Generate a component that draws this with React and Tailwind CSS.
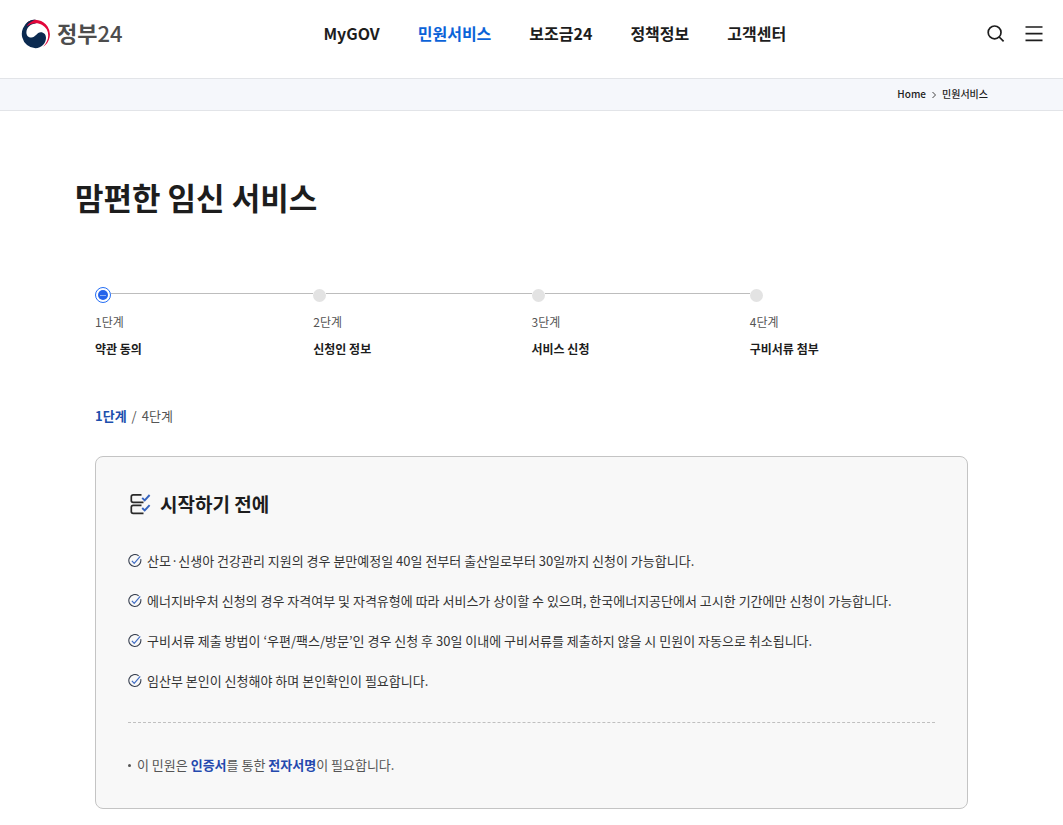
import React from "react";

const menu = ["MyGOV", "민원서비스", "보조금24", "정책정보", "고객센터"];

const steps = ["약관 동의", "신청인 정보", "서비스 신청", "구비서류 첨부"];

const notices = [
  "산모·신생아 건강관리 지원의 경우 분만예정일 40일 전부터 출산일로부터 30일까지 신청이 가능합니다.",
  "에너지바우처 신청의 경우 자격여부 및 자격유형에 따라 서비스가 상이할 수 있으며, 한국에너지공단에서 고시한 기간에만 신청이 가능합니다.",
  "구비서류 제출 방법이 ‘우편/팩스/방문’인 경우 신청 후 30일 이내에 구비서류를 제출하지 않을 시 민원이 자동으로 취소됩니다.",
  "임산부 본인이 신청해야 하며 본인확인이 필요합니다.",
];

function Emblem() {
  return (
    <svg width="31" height="30" viewBox="-1 0 31 30" aria-hidden="true">
      <path
        d="M8 2.3A14.5 14.5 0 0 0 14.5 29.3C20.5 29 25 24.6 25 18.8C25 15.4 22.8 13.2 19.8 13.2C15.8 13.2 14.4 18.5 10.4 18.5C7.4 18.5 5.4 16.4 5.4 13.4C5.4 8.4 9.8 4.6 15 4.4C12.8 3 10.4 2.2 8 2.3Z"
        fill="#0b2a50"
      />
      <path
        d="M6.4 3.2A14.5 14.5 0 0 1 22.2 27.7C27.2 22.6 28.6 16 25.8 10.6C22.2 4.2 13.6 1.8 5.8 7.2Z"
        fill="#e2063a"
      />
      <path d="M5.6 3.9A14.5 14.5 0 0 1 15 .5C11.4 1.6 8.2 3.6 5.4 7.4Z" fill="#0b2a50" />
    </svg>
  );
}

function SearchIcon() {
  return (
    <svg width="18" height="18" viewBox="0 0 18 18" fill="none" stroke="#1d1d1d" strokeWidth="1.7" aria-hidden="true">
      <circle cx="7.6" cy="7.4" r="6.4" />
      <path d="M12.2 12L16.6 16.4" />
    </svg>
  );
}

function MenuIcon() {
  return (
    <svg width="18" height="18" viewBox="0 0 18 18" fill="none" stroke="#1d1d1d" strokeWidth="1.7" aria-hidden="true">
      <path d="M.5 2H17.5M.5 8.7H17.5M.5 15.4H17.5" />
    </svg>
  );
}

function ChecklistIcon() {
  return (
    <svg width="24" height="24" viewBox="0 0 24 24" fill="none" strokeWidth="1.7" aria-hidden="true">
      <path
        d="M13.5 2.8H5.2Q3.3 2.8 3.3 4.7V8.4Q3.3 10.3 5.2 10.3H15.5M13.5 13.3H5.2Q3.3 13.3 3.3 15.2V19.4Q3.3 21.3 5.2 21.3H15.5"
        stroke="#2a2a2a"
      />
      <path d="M14.2 5.8L16.7 8.3L21.6 3M14.2 16L16.7 18.5L21.6 13.2" stroke="#3663bd" strokeWidth="1.9" />
    </svg>
  );
}

function CheckIcon() {
  return (
    <svg className="shrink-0" width="14" height="14" viewBox="0 0 14 14" fill="none" aria-hidden="true">
      <path d="M10.7 1.9A6 6 0 1 0 12.7 5.2" stroke="#3a4252" strokeWidth="1.1" />
      <path d="M3.9 6.9L6.2 9.3L12.2 2.4" stroke="#3f6cc4" strokeWidth="1.2" />
    </svg>
  );
}

export default function App() {
  return (
    <div className="min-h-screen bg-white pb-4 font-['Noto_Sans_CJK_KR',sans-serif] text-[#1d1d1d]">
      <header className="flex h-[78px] items-start justify-between px-5">
        <a href="#" className="flex h-[67px] items-center gap-1.5" aria-label="정부24">
          <Emblem />
          <span className="pb-1 text-[22px] leading-8 font-medium text-[#4d4d4d]">
            <b className="font-bold">정부</b>24
          </span>
        </a>
        <nav className="flex h-[65px] items-center gap-[38px]">
          {menu.map((item, i) => (
            <a
              key={item}
              href="#"
              className={i === 1 ? "text-base leading-6 font-bold text-[#0b63d8]" : "text-base leading-6 font-bold"}
            >
              {item}
            </a>
          ))}
        </nav>
        <div className="flex h-[67px] items-center gap-5">
          <button type="button" aria-label="검색">
            <SearchIcon />
          </button>
          <button type="button" aria-label="전체메뉴">
            <MenuIcon />
          </button>
        </div>
      </header>

      <div className="border-y border-[#e2e4e8] bg-[#f5f7fb] px-[75px]">
        <nav
          className="flex h-[31px] items-center justify-end gap-1.5 pb-0.5 text-[10px] leading-4 font-medium"
          aria-label="현재 위치"
        >
          <a href="#">Home</a>
          <svg className="mt-0.5" width="4" height="8" viewBox="0 0 4 8" fill="none" stroke="#444" aria-hidden="true">
            <path d="M.5 1L3.5 4L.5 7" />
          </svg>
          <a href="#">민원서비스</a>
        </nav>
      </div>

      <main className="px-[75px] pt-[62px]">
        <h1 className="text-[31px] leading-12 font-bold">맘편한 임신 서비스</h1>

        <div className="px-5 pt-[66px]">
          <ol className="grid grid-cols-4">
            {steps.map((label, i) => (
              <li key={label}>
                <div className="flex h-4 items-center">
                  {i === 0 ? (
                    <span className="flex size-4 items-center justify-center rounded-full border border-[#256ef4] bg-white">
                      <span className="flex size-2.5 items-center justify-center rounded-full bg-[#2563eb]">
                        <span className="h-px w-1.5 bg-[#8fb2f5]" />
                      </span>
                    </span>
                  ) : (
                    <span className="size-[13px] rounded-full bg-[#e3e3e3]" />
                  )}
                  {i < 3 && <span className="mb-[3px] h-px flex-1 bg-[#bdbdbd]" />}
                </div>
                <p className="mt-[9px] text-xs leading-5 text-[#555]">{i + 1}단계</p>
                <p className="mt-[7px] text-xs leading-5 font-bold">{label}</p>
              </li>
            ))}
          </ol>

          <p className="mt-[45px] flex gap-[5px] text-[13px] leading-6 text-[#555]">
            <strong className="font-bold text-[#1d4fad]">1단계</strong>
            <span>/</span>
            <span>4단계</span>
          </p>

          <section className="mt-7 rounded-lg border border-[#c4c4c4] bg-[#f8f8f8] px-8 pt-8 pb-[29px]">
            <h2 className="flex items-center gap-2 text-[19px] leading-[30px] font-bold">
              <ChecklistIcon />
              시작하기 전에
            </h2>
            <ul className="mt-[30px] flex flex-col gap-4">
              {notices.map((text) => (
                <li key={text} className="flex items-center gap-[5px] text-[13px] leading-6 text-[#333]">
                  <CheckIcon />
                  {text}
                </li>
              ))}
            </ul>
            <hr className="mt-[29px] border-0 border-t border-dashed border-[#c0c0c0]" />
            <p className="mt-7 flex items-center gap-1.5 text-[13px] leading-7 text-[#555]">
              <span className="size-[3px] rounded-full bg-[#555]" />
              <span>
                이 민원은 <strong className="font-bold text-[#2449ae]">인증서</strong>를 통한{" "}
                <strong className="font-bold text-[#2449ae]">전자서명</strong>이 필요합니다.
              </span>
            </p>
          </section>
        </div>
      </main>
    </div>
  );
}
